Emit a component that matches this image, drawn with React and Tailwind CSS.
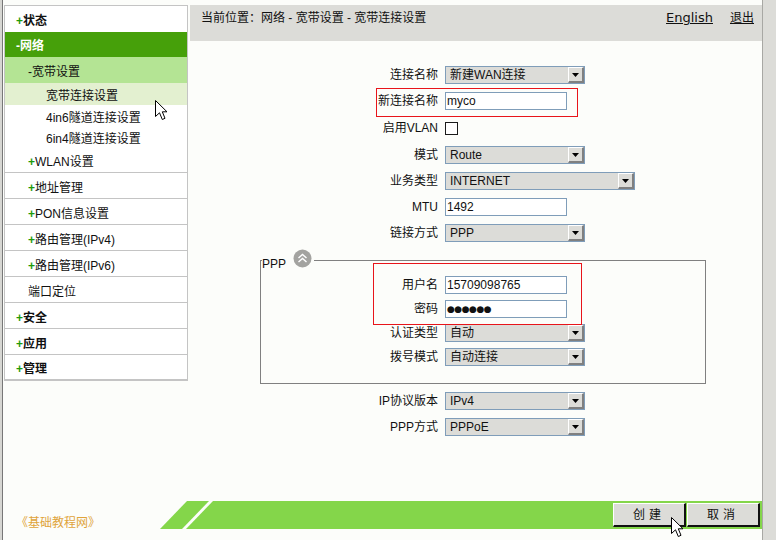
import React from 'react';

const green = 'text-[#1f9a0b]';

function Select({ value, wide }) {
  return (
    <div className={`flex h-[18px] items-stretch border border-[#7f9db9] bg-[#dcdcd8] ${wide ? 'w-[190px]' : 'w-[140px]'}`}>
      <div className="flex flex-1 items-center pl-[4px] leading-none">{value}</div>
      <div className="flex w-[16px] items-center justify-center border-t border-l border-r-2 border-b-2 border-t-white border-l-white border-r-[#808080] border-b-[#808080] bg-[#dcdcd8]">
        <svg width="7" height="4" viewBox="0 0 7 4">
          <path d="M0 0 L7 0 L3.5 4 Z" fill="#000" />
        </svg>
      </div>
    </div>
  );
}

function Input({ children }) {
  return (
    <div className="flex h-[18px] w-[122px] items-center border border-[#7f9db9] bg-white pl-[1px] leading-none">
      {children}
    </div>
  );
}

function Row({ label, children, tall, inner }) {
  return (
    <div className={`flex items-center ${tall ? 'h-[28px]' : inner ? 'h-[24px]' : 'h-[26px]'}`}>
      <div className={`text-right ${inner ? 'w-[177px]' : 'w-[248px]'}`}>{label}</div>
      <div className="ml-[7px]">{children}</div>
    </div>
  );
}

function Cursor({ className }) {
  return (
    <svg className={className} width="13" height="21" viewBox="0 0 13 21">
      <path d="M0.5 0.5 L0.5 16.5 L4.5 12.8 L7.3 19.5 L10 18.3 L7.3 11.8 L12 11.8 Z" fill="#fff" stroke="#000" strokeWidth="1" strokeLinejoin="miter" />
    </svg>
  );
}

export default function App() {
  const subRow = 'flex h-[26px] items-center border-b border-[#c4c4c4] pl-[23px] pt-[4px]';
  const topRow = 'flex h-[26px] items-center border-b border-[#c4c4c4] pl-[11px] pt-[4px] font-bold';

  return (
    <div className="flex h-[540px] w-[776px] overflow-hidden bg-[#fcfdfa] font-['Liberation_Sans','Noto_Sans_CJK_SC',sans-serif] text-[12px] text-[#111]">
      <div className="w-[2px] bg-[#d6d6d2]" />
      <div className="w-px bg-[#777]" />
      <div className="w-px" />

      <div className="flex flex-1 flex-col">
        <div className="flex flex-1 pt-[5px]">
          {/* sidebar */}
          <aside className="relative w-[184px] self-start border-x border-t border-[#c4c4c4] bg-white">
            <div className="flex h-[26px] items-center pl-[11px] pt-[4px] font-bold">
              <span className={green}>+</span>状态
            </div>
            <div className="flex h-[25px] items-center bg-[#46a00a] pl-[11px] pt-[3px] font-bold text-white">-网络</div>
            <div className="flex h-[26px] items-center bg-[#b4e494] pl-[23px] pt-[4px]">-宽带设置</div>
            <div className="flex h-[22px] items-center bg-[#e3f0d0] pl-[41px] pt-[4px]">宽带连接设置</div>
            <div className="flex h-[21px] items-center pl-[41px] pt-[4px]">4in6隧道连接设置</div>
            <div className="flex h-[21px] items-center pl-[41px] pt-[4px]">6in4隧道连接设置</div>
            <div className={subRow}><span className={`font-bold ${green}`}>+</span>WLAN设置</div>
            <div className={subRow}><span className={`font-bold ${green}`}>+</span>地址管理</div>
            <div className={subRow}><span className={`font-bold ${green}`}>+</span>PON信息设置</div>
            <div className={subRow}><span className={`font-bold ${green}`}>+</span>路由管理(IPv4)</div>
            <div className={subRow}><span className={`font-bold ${green}`}>+</span>路由管理(IPv6)</div>
            <div className={subRow}>端口定位</div>
            <div className={topRow}><span className={green}>+</span>安全</div>
            <div className={topRow}><span className={green}>+</span>应用</div>
            <div className="flex h-[26px] items-center border-b-2 border-[#c4c4c4] pl-[11px] pt-[4px] font-bold">
              <span className={green}>+</span>管理
            </div>
            <Cursor className="absolute left-[150px] top-[94px]" />
          </aside>

          {/* main */}
          <main className="relative ml-[2px] flex-1">
            <div className="flex h-[36px] items-start bg-[#dcdcd8] pt-[6px] pl-[11px] pr-[8px] leading-[14px]">
              <span>当前位置：网络 - 宽带设置 - 宽带连接设置</span>
              <a className="ml-auto font-['DejaVu_Sans',sans-serif] text-[13px] underline">English</a>
              <a className="ml-[17px] underline">退出</a>
            </div>

            <div className="pt-[21px]">
              <Row label="连接名称"><Select value="新建WAN连接" /></Row>
              <Row label="新连接名称"><Input>myco</Input></Row>
              <Row label="启用VLAN" tall>
                <div className="h-[13px] w-[13px] border border-[#1a1a1a] bg-white" />
              </Row>
              <Row label="模式"><Select value="Route" /></Row>
              <Row label="业务类型"><Select value="INTERNET" wide /></Row>
              <Row label="MTU"><Input>1492</Input></Row>
              <Row label="链接方式"><Select value="PPP" /></Row>

              <fieldset className="ml-[70px] mt-[3px] w-[446px] border border-[#808080] pb-[14px] pt-[2px]">
                <legend className="ml-[1px] flex h-[22px] pr-[2px]">
                  <span className="self-end leading-[14px]">PPP</span>
                  <svg className="ml-[7px] self-start" width="19" height="19" viewBox="0 0 19 19">
                    <circle cx="9.5" cy="9.5" r="9" fill="#a3a3a0" />
                    <path d="M5.5 9 L9.5 5.5 L13.5 9 M5.5 13 L9.5 9.5 L13.5 13" fill="none" stroke="#fff" strokeWidth="1.4" />
                  </svg>
                </legend>
                <Row label="用户名" inner><Input>15709098765</Input></Row>
                <Row label="密码" inner>
                  <Input><span className="font-['DejaVu_Sans',sans-serif] text-[9px] tracking-[-0.5px]">●●●●●●</span></Input>
                </Row>
                <Row label="认证类型" inner><Select value="自动" /></Row>
                <Row label="拨号模式" inner><Select value="自动连接" /></Row>
              </fieldset>

              <div className="mt-[4px]">
                <Row label="IP协议版本"><Select value="IPv4" /></Row>
                <Row label="PPP方式"><Select value="PPPoE" /></Row>
              </div>
            </div>

            {/* annotation boxes */}
            <div className="absolute left-[186px] top-[83px] h-[29px] w-[202px] border border-[#e8141a]" />
            <div className="absolute left-[183px] top-[258px] h-[62px] w-[209px] border border-[#e8141a]" />
          </main>
        </div>

        {/* footer */}
        <div className="mb-[11px] flex h-[28px]">
          <div className="flex w-[156px] items-end pl-[12px] leading-[11px] text-[#e0a43a]">《基础教程网》</div>
          <svg width="53" height="28" viewBox="0 0 53 28">
            <polygon points="0,28 27,0 49,0 22,28" fill="#84d64a" />
            <polygon points="26,28 53,0 53,28" fill="#84d64a" />
          </svg>
          <div className="relative flex flex-1 items-center justify-end bg-[#84d64a] pr-[2px]">
            <button className="h-[24px] w-[73px] border-t border-l border-r-2 border-b-2 border-t-white border-l-white border-r-[#111] border-b-[#111] bg-[#dcdcd8] tracking-[4px]">创建</button>
            <button className="ml-px h-[24px] w-[73px] border-t border-l border-r-2 border-b-2 border-t-white border-l-white border-r-[#111] border-b-[#111] bg-[#dcdcd8] tracking-[4px]">取消</button>
            <Cursor className="absolute right-[78px] top-[16px]" />
          </div>
        </div>
      </div>

      <div className="w-[14px] border-l border-[#a8a8a4] bg-[#dcdcd8]" />
    </div>
  );
}
